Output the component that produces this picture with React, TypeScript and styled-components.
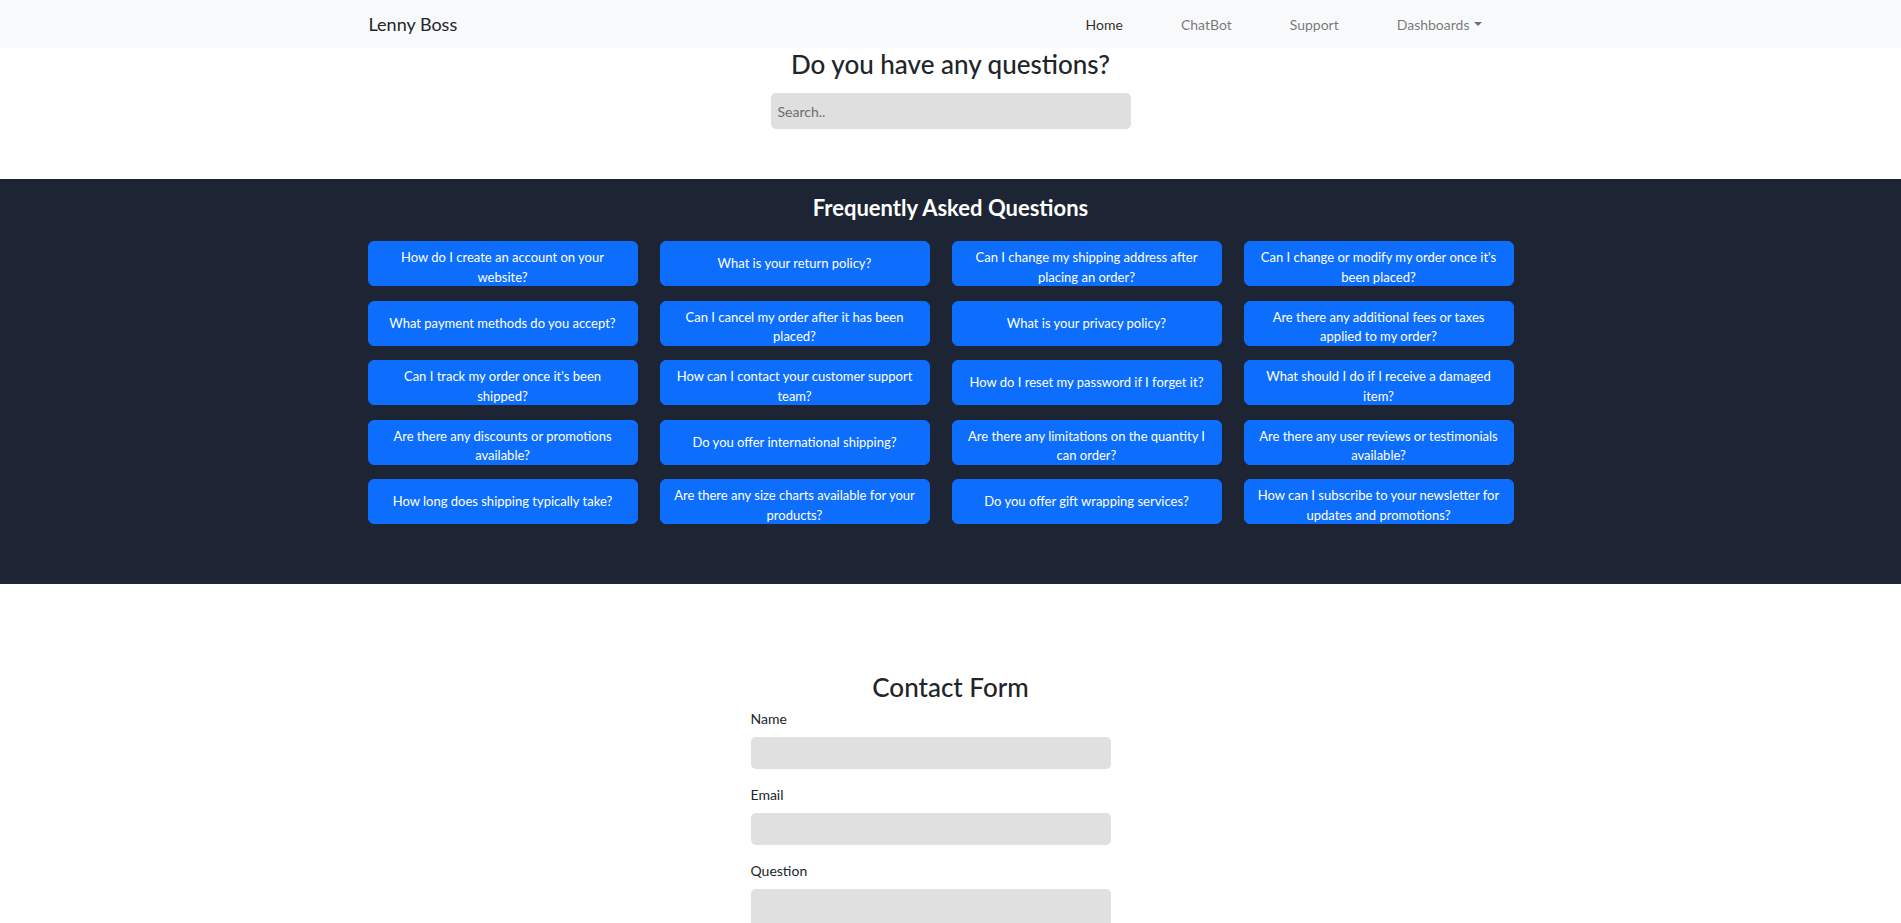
import styled, { createGlobalStyle } from "styled-components";

const GlobalStyle = createGlobalStyle`
    body {
        margin: 0;
        background: #fff;
        font-family: Lato, "Open Sans", sans-serif;
        color: #212529;
    }
    * {
        box-sizing: border-box;
    }
`

const Navbar = styled.nav`
    height: 48px;
    background: #f8f9fa;
`
const NavInner = styled.div`
    height: 100%;
    width: 1142px;
    margin-left: calc(50% - 582px);
    display: flex;
    align-items: center;
    justify-content: space-between;
`
const Brand = styled.a`
    font-size: 18px;
    color: #212529;
    text-decoration: none;
`
const NavList = styled.ul`
    display: flex;
    list-style: none;
    margin: 0;
    padding: 0;
`
const NavLink = styled.a<{ $active?: boolean }>`
    display: flex;
    align-items: center;
    padding: 0 29px;
    font-size: 14px;
    text-decoration: none;
    color: ${(p) => (p.$active ? "rgba(0,0,0,.85)" : "rgba(0,0,0,.55)")};
`
const Caret = styled.span`
    margin-left: 4px;
    border-top: 4px solid rgba(0,0,0,.55);
    border-left: 4px solid transparent;
    border-right: 4px solid transparent;
`

const Hero = styled.section`
    height: 131px;
    display: flex;
    flex-direction: column;
    align-items: center;
`
const Title = styled.h3<{ $top?: number }>`
    margin: ${(p) => p.$top ?? 0}px 0 0;
    font-size: 26px;
    font-weight: 500;
    line-height: 1.2;
    color: #212529;
`
const SearchInput = styled.input`
    margin-top: 13px;
    width: 360px;
    height: 36px;
    border: none;
    border-radius: 5px;
    background: #dfdfdf;
    padding: 0 7px;
    font-family: inherit;
    font-size: 14px;
    &::placeholder {
        color: #6c6c6c;
    }
`

const FaqSection = styled.section`
    background: #1d2433;
    padding: 16px 0 60px;
    display: flex;
    flex-direction: column;
`
const FaqTitle = styled.h4`
    margin: 0 0 20px;
    text-align: center;
    font-size: 22px;
    font-weight: 700;
    line-height: 1.2;
    color: #fff;
`
const FaqGrid = styled.div`
    width: 1146px;
    margin-left: calc(50% - 583px);
    display: grid;
    grid-template-columns: repeat(4, 270px);
    column-gap: 22px;
    row-gap: 14.5px;
`
const FaqButton = styled.button`
    height: 45px;
    padding: 6px 12px;
    border: 1px solid #0d6efd;
    border-radius: 6px;
    background: #0d6efd;
    color: #fff;
    font-family: inherit;
    font-size: 13px;
    line-height: 19.5px;
    white-space: pre-line;
    text-align: center;
    display: flex;
    flex-direction: column;
    justify-content: safe center;
    align-items: center;
    cursor: pointer;
`

const ContactSection = styled.section`
    padding-top: 88px;
    display: flex;
    flex-direction: column;
    align-items: center;
`
const ContactForm = styled.form`
    width: 360px;
    margin-left: calc(50% - 200px);
    align-self: flex-start;
    display: flex;
    flex-direction: column;
`
const Label = styled.label`
    font-size: 14px;
    line-height: 21px;
    margin: 4px 0 8px;
`
const Field = styled.input`
    height: 32px;
    border: none;
    border-radius: 5px;
    background: #e0e0e0;
    margin-bottom: 11px;
`
const TextArea = styled.textarea`
    height: 70px;
    border: none;
    border-radius: 5px;
    background: #e0e0e0;
    resize: none;
`

const questions = [
    "How do I create an account on your\nwebsite?",
    "What is your return policy?",
    "Can I change my shipping address after\nplacing an order?",
    "Can I change or modify my order once it's\nbeen placed?",
    "What payment methods do you accept?",
    "Can I cancel my order after it has been\nplaced?",
    "What is your privacy policy?",
    "Are there any additional fees or taxes\napplied to my order?",
    "Can I track my order once it's been\nshipped?",
    "How can I contact your customer support\nteam?",
    "How do I reset my password if I forget it?",
    "What should I do if I receive a damaged\nitem?",
    "Are there any discounts or promotions\navailable?",
    "Do you offer international shipping?",
    "Are there any limitations on the quantity I\ncan order?",
    "Are there any user reviews or testimonials\navailable?",
    "How long does shipping typically take?",
    "Are there any size charts available for your\nproducts?",
    "Do you offer gift wrapping services?",
    "How can I subscribe to your newsletter for\nupdates and promotions?",
]

const App = () => {
    return (
        <>
            <GlobalStyle />
            <Navbar>
                <NavInner>
                    <Brand href="#">Lenny Boss</Brand>
                    <NavList>
                        <li><NavLink href="#" $active>Home</NavLink></li>
                        <li><NavLink href="#">ChatBot</NavLink></li>
                        <li><NavLink href="#">Support</NavLink></li>
                        <li><NavLink href="#">Dashboards<Caret /></NavLink></li>
                    </NavList>
                </NavInner>
            </Navbar>
            <Hero>
                <Title $top={1}>Do you have any questions?</Title>
                <SearchInput placeholder="Search.." />
            </Hero>
            <FaqSection>
                <FaqTitle>Frequently Asked Questions</FaqTitle>
                <FaqGrid>
                    {questions.map((q, index) => (
                        <FaqButton key={index}>{q}</FaqButton>
                    ))}
                </FaqGrid>
            </FaqSection>
            <ContactSection>
                <Title>Contact Form</Title>
                <ContactForm onSubmit={(e) => e.preventDefault()}>
                    <Label>Name</Label>
                    <Field type="text" />
                    <Label>Email</Label>
                    <Field type="email" />
                    <Label>Question</Label>
                    <TextArea />
                </ContactForm>
            </ContactSection>
        </>
    )
}
export default App
